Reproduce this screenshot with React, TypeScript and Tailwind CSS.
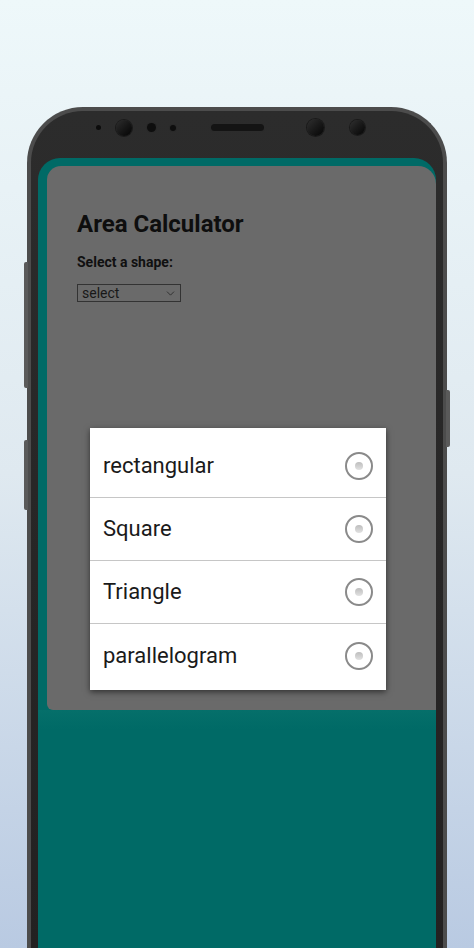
import { ChevronDown } from "lucide-react";

const SHAPES = ["rectangular", "Square", "Triangle", "parallelogram"];

function Radio() {
  return (
    <span className="flex h-[28px] w-[28px] shrink-0 items-center justify-center rounded-full border-2 border-[#8a8a8a] bg-white">
      <span className="h-[8px] w-[8px] rounded-full bg-gradient-to-b from-[#bdbdbd] to-[#e2e2e2]" />
    </span>
  );
}

function Sensors() {
  return (
    <div className="flex h-[47px] items-center pb-[14px]">
      <span className="ml-[58px] h-[5px] w-[5px] rounded-full bg-[#0c0c0c]" />
      <span className="ml-[15px] h-[16px] w-[16px] rounded-full bg-gradient-to-br from-[#2e2e2e] to-[#050505] shadow-[0_0_0_1px_#1a1a1a]" />
      <span className="ml-[15px] h-[9px] w-[9px] rounded-full bg-[#0e0e0e] shadow-[0_0_0_1px_#2a2a2a]" />
      <span className="ml-[14px] h-[6px] w-[6px] rounded-full bg-[#0e0e0e] shadow-[0_0_0_1px_#2a2a2a]" />
      <span className="ml-[35px] h-[7px] w-[53px] rounded-full bg-[#141414] shadow-[0_0_0_1px_#2c2c2c]" />
      <span className="ml-[43px] h-[17px] w-[17px] rounded-full bg-gradient-to-br from-[#303030] to-[#060606] shadow-[0_0_0_1px_#1a1a1a]" />
      <span className="ml-[26px] h-[15px] w-[15px] rounded-full bg-gradient-to-br from-[#303030] to-[#060606] shadow-[0_0_0_1px_#1a1a1a]" />
    </div>
  );
}

export default function App() {
  return (
    <div
      className="relative h-[948px] w-[474px] overflow-hidden bg-gradient-to-b from-[#eef8fa] via-[#dfe9f0] to-[#b9cae2] pt-[107px] pl-[27px]"
      style={{ fontFamily: "Roboto, 'Noto Sans', sans-serif" }}
    >
      <div className="relative h-[841px] w-[420px]">
        {/* side buttons */}
        <span className="absolute top-[155px] -left-[3px] h-[126px] w-[4px] rounded-l-[2px] bg-[#5a5a5a]" />
        <span className="absolute top-[333px] -left-[3px] h-[70px] w-[4px] rounded-l-[2px] bg-[#5a5a5a]" />
        <span className="absolute top-[283px] -right-[3px] h-[57px] w-[4px] rounded-r-[2px] bg-[#5a5a5a]" />

        <div className="flex h-full flex-col rounded-t-[56px] border-x-[4px] border-t-[4px] border-[#4c4c4c] bg-gradient-to-b from-[#2c2c2c] to-[#232121] px-[7px]">
          <Sensors />

          <div className="flex flex-1 flex-col overflow-hidden rounded-t-[22px] bg-[#006a66]">
            <div className="ml-[9px] mt-[8px] h-[544px] rounded-tl-[14px] rounded-tr-[18px] rounded-bl-[6px] bg-[#6a6a6a] pl-[30px]">
              <h1 className="mt-[44px] text-[24px] leading-[28px] font-bold text-[#0e0e0e]">Area Calculator</h1>
              <p className="mt-[15px] text-[14px] leading-[18px] font-bold text-[#101010]">Select a shape:</p>
              <div className="mt-[13px] flex h-[18px] w-[104px] items-center justify-between border border-[#333333] pl-[4px] pr-[3px] text-[14px] leading-[16px] text-[#181818]">
                <span>select</span>
                <ChevronDown className="h-[13px] w-[13px] text-[#262626]" strokeWidth={1.5} />
              </div>

              <div className="ml-[13px] mt-[126px] w-[296px] bg-white pt-[7px] pb-[3px] shadow-[0_2px_6px_rgba(0,0,0,0.55)]">
                {SHAPES.map((s, i) => (
                  <div
                    key={s}
                    className={`flex h-[63px] items-center justify-between pl-[13px] pr-[13px] ${
                      i < SHAPES.length - 1 ? "border-b border-[#c6c6c6]" : ""
                    }`}
                  >
                    <span className="text-[22px] leading-[26px] text-[#1a1a1a]">{s}</span>
                    <Radio />
                  </div>
                ))}
              </div>
            </div>
            <div className="h-[20px] bg-gradient-to-b from-[#056f6a] to-[#006a66]" />
          </div>
        </div>
      </div>
    </div>
  );
}
